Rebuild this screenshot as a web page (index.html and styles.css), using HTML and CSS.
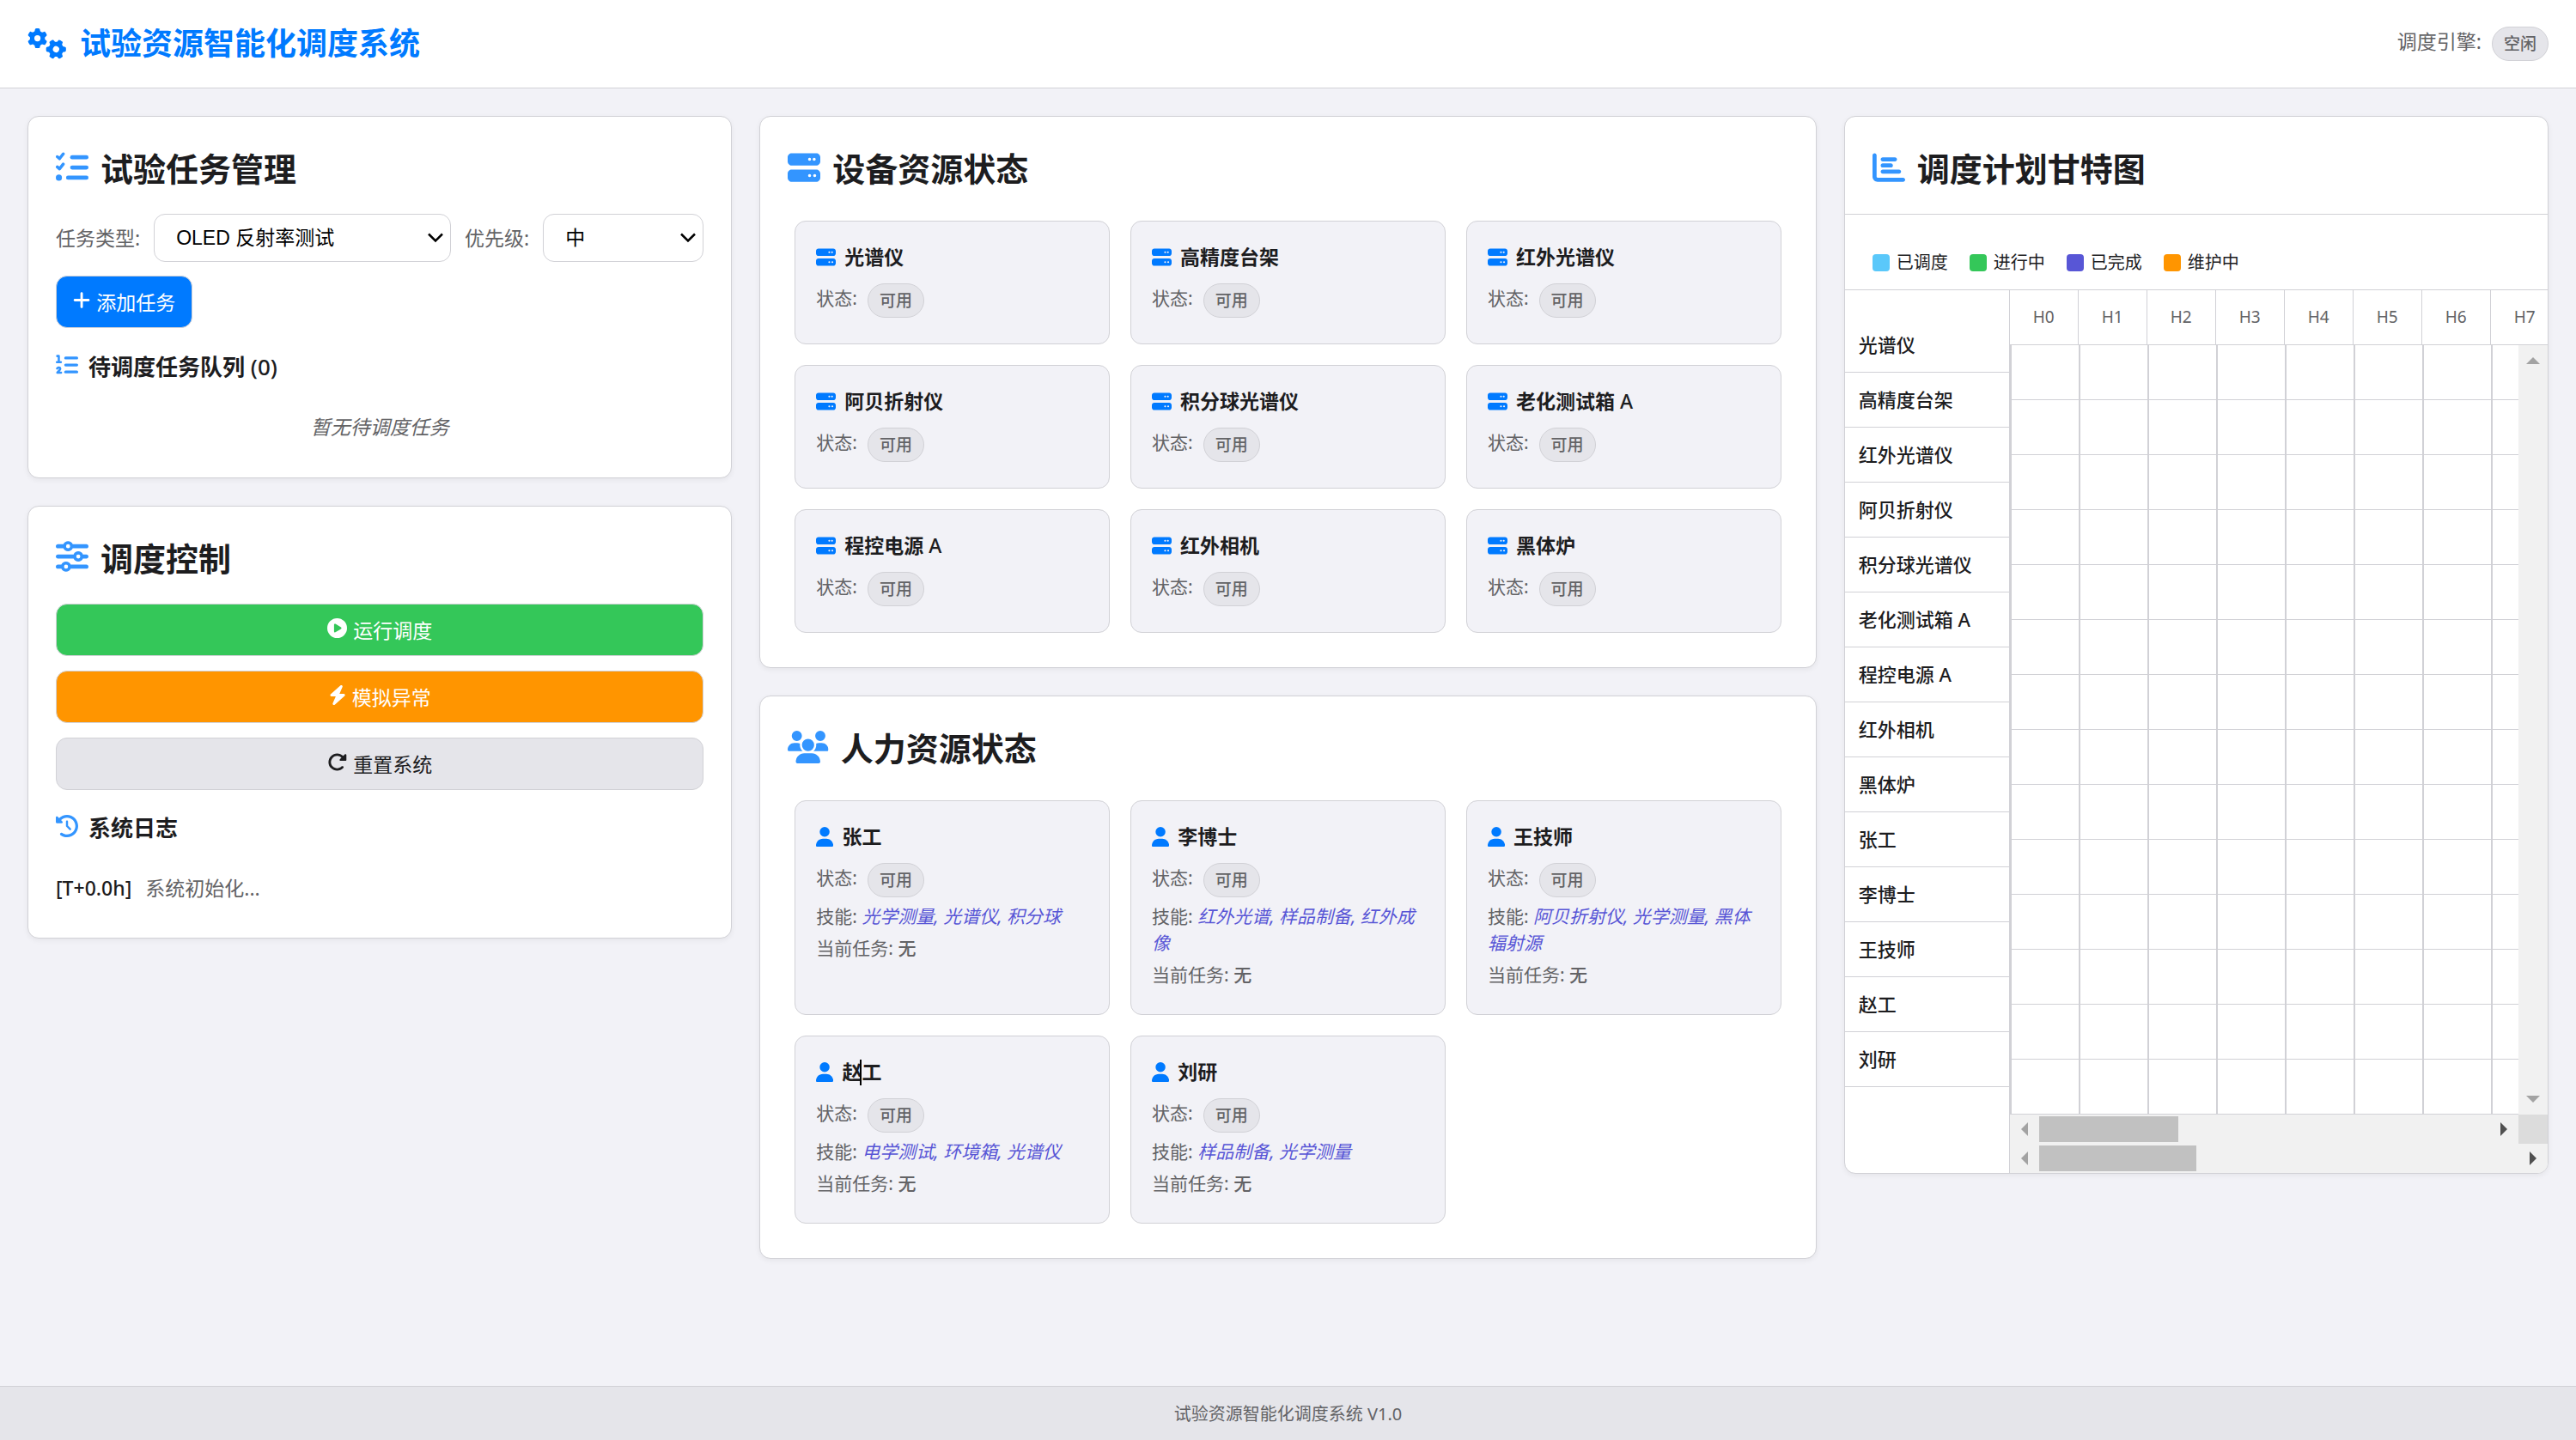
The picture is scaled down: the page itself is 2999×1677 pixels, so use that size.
FILE: index.html
```html
<!DOCTYPE html>
<html lang="zh-CN">
<head>
    <meta charset="UTF-8">
    <meta name="viewport" content="width=device-width, initial-scale=1.0">
    <title>试验资源智能化调度系统</title>
    <link rel="stylesheet" href="styles.css">
</head>
<body>
    <!-- 图标定义 -->
    <svg class="icon-defs" aria-hidden="true">
        <symbol id="i-gear" viewBox="0 0 512 512"><path fill-rule="evenodd" d="M495.900 166.600c3.200 8.700.5 18.400-6.400 24.600l-43.300 39.400c1.100 8.300 1.700 16.800 1.700 25.400s-.6 17.100-1.700 25.400l43.300 39.400c6.900 6.200 9.600 15.900 6.400 24.600-4.400 11.900-9.700 23.300-15.800 34.300l-4.700 8.100c-6.600 11-14 21.400-22.100 31.200-5.900 7.200-15.700 9.600-24.500 6.800l-55.700-17.700c-13.400 10.300-28.200 18.900-44 25.400l-12.500 57.100c-2 9.100-9 16.300-18.200 17.800-13.800 2.300-28 3.500-42.500 3.500s-28.700-1.200-42.500-3.500c-9.200-1.500-16.200-8.700-18.200-17.800l-12.500-57.100c-15.800-6.500-30.600-15.100-44-25.400l-55.600 17.800c-8.800 2.800-18.600.3-24.500-6.800-8.100-9.800-15.500-20.200-22.100-31.200l-4.700-8.100c-6.100-11-11.400-22.400-15.800-34.300-3.200-8.700-.5-18.400 6.400-24.600l43.300-39.400c-1.100-8.400-1.700-16.900-1.700-25.500s.6-17.100 1.700-25.400l-43.300-39.400c-6.900-6.200-9.600-15.900-6.400-24.600 4.400-11.900 9.700-23.300 15.800-34.300l4.700-8.100c6.600-11 14-21.400 22.100-31.200 5.900-7.200 15.700-9.600 24.500-6.800l55.700 17.700c13.400-10.300 28.200-18.900 44-25.400l12.500-57.100c2-9.100 9-16.300 18.200-17.800C227.300 1.200 241.500 0 256 0s28.700 1.200 42.500 3.500c9.200 1.500 16.200 8.700 18.200 17.800l12.500 57.100c15.800 6.500 30.600 15.100 44 25.400l55.700-17.700c8.800-2.800 18.600-.3 24.500 6.800 8.100 9.800 15.500 20.200 22.100 31.200l4.700 8.100c6.100 11 11.400 22.400 15.700 34.400zM256 336a80 80 0 1 0 0-160 80 80 0 1 0 0 160z"/></symbol>
        <symbol id="i-cogs" viewBox="0 0 640 512"><use href="#i-gear" x="0" y="0" width="330" height="330"/><use href="#i-gear" x="308" y="182" width="330" height="330" transform="rotate(30 473 347)"/></symbol>
        <symbol id="i-tasks" viewBox="0 0 512 512"><path d="M48 88l34 30 58-74M48 248l34 30 58-74" transform="translate(-24 0)" fill="none" stroke="currentColor" stroke-width="48" stroke-linecap="round" stroke-linejoin="round"/><circle cx="48" cy="416" r="48"/><rect x="224" y="64" width="288" height="64" rx="32"/><rect x="224" y="224" width="288" height="64" rx="32"/><rect x="160" y="384" width="352" height="64" rx="32"/></symbol>
        <symbol id="i-listol" viewBox="0 0 512 512"><path d="M32 52h36v132M24 192h92M30 336c18-34 76-24 70 14-3 22-40 48-66 82h86" fill="none" stroke="currentColor" stroke-width="50" stroke-linecap="round" stroke-linejoin="round"/><rect x="192" y="64" width="320" height="64" rx="32"/><rect x="192" y="224" width="320" height="64" rx="32"/><rect x="192" y="384" width="320" height="64" rx="32"/></symbol>
        <symbol id="i-sliders" viewBox="0 0 512 512"><path d="M0 416c0 17.700 14.300 32 32 32h54.700c12.300 28.300 40.500 48 73.300 48s61-19.700 73.300-48H480c17.700 0 32-14.300 32-32s-14.300-32-32-32H233.300c-12.300-28.300-40.500-48-73.300-48s-61 19.700-73.300 48H32c-17.700 0-32 14.300-32 32zm128 0a32 32 0 1 1 64 0 32 32 0 1 1-64 0zm192-160a32 32 0 1 1 64 0 32 32 0 1 1-64 0zm32-80c-32.800 0-61 19.700-73.300 48H32c-17.700 0-32 14.300-32 32s14.300 32 32 32h246.700c12.300 28.300 40.500 48 73.300 48s61-19.700 73.300-48H480c17.700 0 32-14.300 32-32s-14.300-32-32-32h-54.700c-12.300-28.300-40.500-48-73.300-48zM192 128a32 32 0 1 1 0-64 32 32 0 1 1 0 64zm73.300-64C253 35.700 224.800 16 192 16s-61 19.700-73.300 48H32C14.300 64 0 78.300 0 96s14.300 32 32 32h86.700c12.300 28.300 40.500 48 73.300 48s61-19.700 73.300-48H480c17.700 0 32-14.300 32-32s-14.300-32-32-32H265.300z"/></symbol>
        <symbol id="i-server" viewBox="0 0 512 512"><path fill-rule="evenodd" d="M64 32C28.700 32 0 60.700 0 96v64c0 35.300 28.700 64 64 64h384c35.300 0 64-28.700 64-64V96c0-35.300-28.700-64-64-64H64zm280 72a24 24 0 1 1 0 48 24 24 0 1 1 0-48zm48 24a24 24 0 1 1 48 0 24 24 0 1 1-48 0zM64 288c-35.300 0-64 28.700-64 64v64c0 35.300 28.700 64 64 64h384c35.300 0 64-28.700 64-64v-64c0-35.300-28.700-64-64-64H64zm280 72a24 24 0 1 1 0 48 24 24 0 1 1 0-48zm56 24a24 24 0 1 1 48 0 24 24 0 1 1-48 0z"/></symbol>
        <symbol id="i-users" viewBox="0 0 640 512"><path d="M144 0a80 80 0 1 1 0 160 80 80 0 1 1 0-160zm368 0a80 80 0 1 1 0 160 80 80 0 1 1 0-160zM0 298.700C0 239.800 47.800 192 106.700 192h42.700c15.900 0 31 3.500 44.600 9.700-1.300 7.200-1.900 14.700-1.900 22.300 0 38.200 16.800 72.500 43.300 96H21.300C9.600 320 0 310.400 0 298.700zM405.300 320h-.7c26.600-23.500 43.300-57.800 43.300-96 0-7.600-.7-15-1.900-22.300 13.600-6.300 28.700-9.700 44.600-9.700h42.700c58.900 0 106.700 47.800 106.700 106.700 0 11.700-9.600 21.300-21.300 21.300H405.300zM224 224a96 96 0 1 1 192 0 96 96 0 1 1-192 0zM128 485.300C128 411.700 187.700 352 261.300 352h117.400c73.600 0 133.300 59.700 133.300 133.300 0 14.700-11.900 26.700-26.700 26.700H154.700c-14.700 0-26.700-11.900-26.700-26.700z"/></symbol>
        <symbol id="i-user" viewBox="0 0 448 512"><path d="M224 256a128 128 0 1 0 0-256 128 128 0 1 0 0 256zm-45.700 48C79.800 304 0 383.800 0 482.300 0 498.700 13.300 512 29.700 512h388.600c16.400 0 29.700-13.300 29.700-29.700 0-98.500-79.800-178.300-178.300-178.300h-91.400z"/></symbol>
        <symbol id="i-plus" viewBox="0 0 448 512"><path d="M256 80c0-17.700-14.300-32-32-32s-32 14.300-32 32v144H48c-17.700 0-32 14.300-32 32s14.300 32 32 32h144v144c0 17.700 14.300 32 32 32s32-14.300 32-32V288h144c17.700 0 32-14.300 32-32s-14.300-32-32-32H256V80z"/></symbol>
        <symbol id="i-play" viewBox="0 0 512 512"><path fill-rule="evenodd" d="M256 0a256 256 0 1 1 0 512 256 256 0 1 1 0-512zM188.300 147.100c-7.600 4.200-12.300 12.300-12.300 20.900v176c0 8.700 4.700 16.700 12.300 20.900s16.800 4.100 24.300-.5l144-88c7.100-4.400 11.500-12.100 11.500-20.500s-4.400-16.100-11.500-20.500l-144-88c-7.400-4.500-16.700-4.700-24.300-.3z"/></symbol>
        <symbol id="i-bolt" viewBox="0 0 448 512"><path d="M349.400 44.600c5.900-13.700 1.500-29.700-10.600-38.500s-28.600-8-39.900 1.800l-256 224c-10 8.800-13.600 22.900-8.900 35.300S50.700 288 64 288h111.500L98.600 467.400c-5.900 13.700-1.500 29.700 10.600 38.500s28.600 8 39.900-1.800l256-224c10-8.800 13.600-22.900 8.900-35.300s-16.600-20.700-30-20.700H272.500l76.900-179.500z"/></symbol>
        <symbol id="i-redo" viewBox="0 0 512 512"><path d="M463.500 224H472c13.300 0 24-10.700 24-24V72c0-9.700-5.800-18.500-14.800-22.200s-19.300-1.700-26.200 5.200l-41.600 41.600c-87.600-86.500-228.700-86.200-315.800 1-87.500 87.500-87.500 229.300 0 316.800s229.300 87.500 316.800 0c12.500-12.500 12.500-32.800 0-45.300s-32.800-12.500-45.300 0c-62.500 62.500-163.800 62.500-226.300 0s-62.500-163.800 0-226.300c62.200-62.200 162.700-62.500 225.300-1L327 183c-6.900 6.900-8.900 17.200-5.200 26.200s12.500 14.800 22.200 14.800h119.500z"/></symbol>
        <symbol id="i-history" viewBox="0 0 512 512"><path d="M75 75L41 41C25.900 25.900 0 36.600 0 57.900V168c0 13.300 10.700 24 24 24h110.100c21.400 0 32.100-25.900 17-41l-30.800-30.800C155 85.500 203 64 256 64c106 0 192 86 192 192s-86 192-192 192c-40.800 0-78.600-12.700-109.700-34.400-14.500-10.100-34.400-6.600-44.600 7.900s-6.600 34.400 7.900 44.600C151.200 495 201.700 512 256 512c141.400 0 256-114.600 256-256S397.400 0 256 0C185.300 0 121.300 28.700 75 75zm181 53c-13.300 0-24 10.700-24 24v104c0 6.400 2.500 12.500 7 17l72 72c9.400 9.400 24.600 9.400 33.900 0s9.400-24.600 0-33.900l-65-65V152c0-13.300-10.700-24-24-24z"/></symbol>
        <symbol id="i-chart" viewBox="0 0 512 512"><path d="M32 32c17.700 0 32 14.300 32 32v336c0 8.800 7.200 16 16 16h400c17.700 0 32 14.300 32 32s-14.300 32-32 32H80c-44.200 0-80-35.800-80-80V64c0-17.700 14.300-32 32-32zm96 96c0-17.700 14.300-32 32-32h192c17.700 0 32 14.300 32 32s-14.300 32-32 32H160c-17.700 0-32-14.300-32-32zm32 64h128c17.700 0 32 14.300 32 32s-14.300 32-32 32H160c-17.700 0-32-14.300-32-32s14.300-32 32-32zm0 96h256c17.700 0 32 14.300 32 32s-14.300 32-32 32H160c-17.700 0-32-14.300-32-32s14.300-32 32-32z"/></symbol>
    </svg>

    <header class="app-header">
        <h1><svg class="icon icon-wide"><use href="#i-cogs"/></svg>试验资源智能化调度系统</h1>
        <div class="engine">调度引擎: <span class="badge">空闲</span></div>
    </header>

    <main class="main">
        <div class="column">
            <section class="card">
                <h2><svg class="icon"><use href="#i-tasks"/></svg>试验任务管理</h2>
                <div class="task-form">
                    <label for="taskType">任务类型:</label>
                    <select id="taskType" class="select-type">
                        <option>OLED 反射率测试</option>
                    </select>
                    <label for="priority">优先级:</label>
                    <select id="priority" class="select-priority">
                        <option>高</option>
                        <option selected>中</option>
                        <option>低</option>
                    </select>
                    <button type="button" class="btn btn-primary"><svg class="icon icon-narrow"><use href="#i-plus"/></svg>添加任务</button>
                </div>
                <h3><svg class="icon"><use href="#i-listol"/></svg><span>待调度任务队列 <span class="latin">(0)</span></span></h3>
                <p class="empty">暂无待调度任务</p>
            </section>

            <section class="card">
                <h2><svg class="icon"><use href="#i-sliders"/></svg>调度控制</h2>
                <div class="controls">
                    <button type="button" class="btn btn-success"><svg class="icon"><use href="#i-play"/></svg>运行调度</button>
                    <button type="button" class="btn btn-warning"><svg class="icon icon-narrow"><use href="#i-bolt"/></svg>模拟异常</button>
                    <button type="button" class="btn"><svg class="icon"><use href="#i-redo"/></svg>重置系统</button>
                </div>
                <h3><svg class="icon"><use href="#i-history"/></svg>系统日志</h3>
                <p class="log"><span class="log-time">[T+0.0h]</span>系统初始化...</p>
            </section>
        </div>

        <div class="column">
            <section class="card">
                <h2><svg class="icon"><use href="#i-server"/></svg>设备资源状态</h2>
                <div class="resources" id="devices"></div>
            </section>

            <section class="card">
                <h2><svg class="icon icon-wide"><use href="#i-users"/></svg>人力资源状态</h2>
                <div class="resources" id="people"></div>
            </section>
        </div>

        <div class="column">
            <section class="card gantt">
                <h2><svg class="icon"><use href="#i-chart"/></svg>调度计划甘特图</h2>
                <div class="legend">
                    <span><i class="swatch scheduled"></i>已调度</span>
                    <span><i class="swatch running"></i>进行中</span>
                    <span><i class="swatch done"></i>已完成</span>
                    <span><i class="swatch maintenance"></i>维护中</span>
                </div>
                <div class="gantt-body">
                    <div class="gantt-labels" id="ganttLabels"></div>
                    <div class="gantt-chart">
                        <div class="hours" id="hours"></div>
                        <div class="gantt-view">
                            <div class="gantt-grid" id="ganttGrid"></div>
                            <div class="scroll scroll-y" aria-hidden="true"><i class="arrow up"></i><i class="arrow down"></i></div>
                        </div>
                        <div class="scroll-line" aria-hidden="true">
                            <div class="scroll scroll-x"><i class="arrow left"></i><i class="thumb"></i><i class="arrow right"></i></div>
                            <i class="corner"></i>
                        </div>
                        <div class="scroll-line" aria-hidden="true">
                            <div class="scroll scroll-x"><i class="arrow left"></i><i class="thumb thumb-outer"></i><i class="arrow right"></i></div>
                        </div>
                    </div>
                </div>
            </section>
        </div>
    </main>

    <footer class="app-footer">试验资源智能化调度系统 V1.0</footer>

    <script src="script.js"></script>
</body>
</html>
```

FILE: styles.css
```css
* {
    box-sizing: border-box;
}

body {
    margin: 0;
    min-height: 100vh;
    display: flex;
    flex-direction: column;
    font-family: "Noto Sans", "Noto Sans CJK SC", sans-serif;
    font-size: 23px;
    line-height: 1.5;
    color: #1d1d1f;
    background-color: #f2f2f7;
}

h1, h2, h3, h4, p {
    margin: 0;
}

.icon-defs {
    position: absolute;
    width: 0;
    height: 0;
}

.icon {
    width: 1em;
    height: 1em;
    fill: currentColor;
    flex: none;
}

.icon-wide {
    width: 1.25em;
}

.icon-narrow {
    width: 0.875em;
}

.latin {
    font-weight: 500;
}

/* 页头 */
.app-header {
    height: 103px;
    padding: 0 32px;
    display: flex;
    align-items: center;
    justify-content: space-between;
    background-color: #fff;
    border-bottom: 1px solid #d1d1d6;
}

.app-header h1 {
    display: flex;
    align-items: center;
    gap: 16px;
    font-size: 36px;
    font-weight: 600;
    color: #007aff;
}

.engine {
    display: flex;
    align-items: flex-start;
    gap: 12px;
    color: #636366;
}

.badge {
    display: inline-block;
    padding: 4px 13px;
    font-size: 19px;
    line-height: 30px;
    font-weight: 500;
    color: #636366;
    background-color: #e5e5ea;
    border: 1px solid #d1d1d6;
    border-radius: 20px;
}

/* 布局 */
.main {
    flex: 1;
    display: grid;
    grid-template-columns: 1fr 1.5fr 1fr;
    gap: 32px;
    padding: 32px;
    align-items: start;
}

.column {
    display: flex;
    flex-direction: column;
    gap: 32px;
    min-width: 0;
}

.card {
    padding: 32px;
    background-color: #fff;
    border: 1px solid #d1d1d6;
    border-radius: 13px;
    box-shadow: 0 2px 6px rgba(0, 0, 0, 0.06);
}

.card h2 {
    display: flex;
    align-items: center;
    gap: 14px;
    margin-bottom: 24px;
    font-size: 38px;
    line-height: 57px;
    font-weight: 600;
}

.card h3 {
    display: flex;
    align-items: center;
    gap: 12px;
    font-size: 26px;
    line-height: 38px;
    font-weight: 600;
}

.card h2 .icon,
.card h3 .icon {
    margin-bottom: 4px;
    color: #3395ff;
}

/* 任务表单 */
.task-form {
    display: flex;
    flex-wrap: wrap;
    align-items: center;
    gap: 16px;
    margin-bottom: 26px;
}

.task-form label {
    color: #636366;
}

select {
    height: 56px;
    padding: 0 34px 0 25px;
    font-family: "Liberation Sans", "Noto Sans CJK SC", sans-serif;
    font-size: 23px;
    color: #000;
    background: #fff url("data:image/svg+xml,%3Csvg xmlns='http://www.w3.org/2000/svg' width='18' height='12' fill='none' stroke='black' stroke-width='2.5'%3E%3Cpath d='M1 1.500l8 8 8-8'/%3E%3C/svg%3E") no-repeat right 8px center;
    border: 1px solid #d1d1d6;
    border-radius: 13px;
    appearance: none;
}

.select-type {
    flex: 1;
}

.select-priority {
    width: 187px;
}

.btn {
    height: 61px;
    padding: 2px 19px 0;
    display: flex;
    align-items: center;
    justify-content: center;
    gap: 7px;
    font: inherit;
    color: #1d1d1f;
    background-color: #e5e5ea;
    border: 1px solid #d1d1d6;
    border-radius: 13px;
    cursor: pointer;
}

.btn .icon {
    margin-bottom: 6px;
}

.btn-primary {
    color: #fff;
    background-color: #007aff;
}

.btn-success {
    color: #fff;
    background-color: #34c759;
}

.btn-warning {
    color: #fff;
    background-color: #ff9500;
}

.empty,
.log {
    padding: 34px 0 9px;
    color: #636366;
}

.empty {
    text-align: center;
    font-style: italic;
}

.controls {
    display: flex;
    flex-direction: column;
    gap: 17px;
    margin-bottom: 25px;
}

.log-time {
    margin-right: 16px;
    font-weight: 500;
    color: #1d1d1f;
}

/* 资源卡片 */
.resources {
    display: grid;
    grid-template-columns: repeat(3, 1fr);
    gap: 24px;
    padding: 8px;
}

.resource {
    padding: 24px;
    background-color: #f2f2f7;
    border: 1px solid #d1d1d6;
    border-radius: 13px;
    font-size: 21px;
    line-height: 31px;
    color: #636366;
}

.resource h4 {
    display: flex;
    align-items: center;
    gap: 10px;
    margin-bottom: 13px;
    font-size: 23px;
    line-height: 35px;
    font-weight: 600;
    color: #1d1d1f;
}

.resource h4 .icon {
    color: #007aff;
}

.resource p {
    margin-bottom: 6px;
}

.resource .status {
    display: flex;
    align-items: flex-start;
    gap: 12px;
    height: 40px;
    line-height: 34px;
}

.resource .status:not(:last-child) {
    margin-bottom: 7px;
}

.skills {
    color: #5856d6;
    font-style: italic;
}

.resource strong {
    font-weight: 500;
}

.caret {
    position: relative;
}

.caret::after {
    content: "";
    position: absolute;
    right: 0;
    top: 2px;
    width: 2px;
    height: 30px;
    background-color: #000;
}

/* 甘特图 */
.gantt {
    padding: 0;
    overflow: hidden;
}

.gantt h2 {
    margin: 0;
    padding: 32px 32px 24px;
    border-bottom: 1px solid #d1d1d6;
}

.legend {
    display: flex;
    gap: 25px;
    padding: 41px 32px 16px;
    font-size: 20px;
    line-height: 30px;
    border-bottom: 1px solid #d1d1d6;
}

.legend span {
    display: flex;
    align-items: center;
    gap: 8px;
}

.swatch {
    width: 20px;
    height: 20px;
    border-radius: 4px;
}

.scheduled {
    background-color: #5ac8fa;
}

.running {
    background-color: #34c759;
}

.done {
    background-color: #5856d6;
}

.maintenance {
    background-color: #ff9500;
}

.gantt-body {
    display: flex;
}

.gantt-labels {
    width: 192px;
    flex: none;
    padding-top: 32px;
    border-right: 1px solid #d1d1d6;
}

.gantt-labels div {
    height: 64px;
    padding: 0 16px;
    font-size: 22px;
    line-height: 63px;
    font-weight: 500;
    border-bottom: 1px solid #d1d1d6;
}

.gantt-chart {
    flex: 1;
    min-width: 0;
}

.hours {
    display: flex;
    overflow: hidden;
    border-bottom: 1px solid #d1d1d6;
}

.hours div {
    flex: none;
    width: 80px;
    height: 63px;
    font-size: 19px;
    line-height: 63px;
    text-align: center;
    color: #636366;
    border-right: 1px solid #d1d1d6;
}

.gantt-view,
.scroll-line {
    display: flex;
}

.gantt-grid {
    flex: 1;
    min-width: 0;
    overflow: hidden;
}

.gantt-row {
    display: flex;
    height: 64px;
    border-bottom: 1px solid #d1d1d6;
}

.gantt-row div {
    flex: none;
    width: 80px;
    border-left: 2px solid #d1d1d6;
}

/* 滚动条 */
.scroll {
    display: flex;
    justify-content: space-between;
    align-items: center;
    background-color: #f1f1f1;
}

.scroll-y {
    width: 34px;
    flex-direction: column;
    padding: 14px 0;
}

.scroll-x {
    flex: 1;
    height: 34px;
    padding: 0 13px;
}

.thumb {
    width: 162px;
    height: 30px;
    margin: 0 auto 0 13px;
    background-color: #c1c1c1;
}

.thumb-outer {
    width: 183px;
}

.corner {
    width: 34px;
    height: 34px;
    background-color: #dcdcdc;
}

.arrow {
    border: 8px solid transparent;
}

.arrow.up {
    border-top: 0;
    border-bottom-color: #a3a3a3;
}

.arrow.down {
    border-bottom: 0;
    border-top-color: #a3a3a3;
}

.arrow.left {
    border-left: 0;
    border-right-color: #a3a3a3;
}

.arrow.right {
    border-right: 0;
    border-left-color: #505050;
}

.app-footer {
    height: 63px;
    line-height: 63px;
    text-align: center;
    font-size: 20px;
    color: #636366;
    background-color: #e5e5ea;
    border-top: 1px solid #d1d1d6;
}
```

FILE: script.js
```js
const devices = ["光谱仪", "高精度台架", "红外光谱仪", "阿贝折射仪", "积分球光谱仪", "老化测试箱 A", "程控电源 A", "红外相机", "黑体炉"];

const people = [
    { name: "张工", skills: "光学测量, 光谱仪, 积分球" },
    { name: "李博士", skills: "红外光谱, 样品制备, 红外成像" },
    { name: "王技师", skills: "阿贝折射仪, 光学测量, 黑体辐射源" },
    { name: '<span class="caret">赵</span>工', skills: "电学测试, 环境箱, 光谱仪" },
    { name: "刘研", skills: "样品制备, 光学测量" }
];

const statusRow = '<p class="status">状态: <span class="badge">可用</span></p>';

// 设备卡片
document.getElementById("devices").innerHTML = devices.map(name => `
    <article class="resource">
        <h4><svg class="icon"><use href="#i-server"/></svg><span>${name.replace("A", '<span class="latin">A</span>')}</span></h4>
        ${statusRow}
    </article>`).join("");

// 人员卡片
document.getElementById("people").innerHTML = people.map(p => `
    <article class="resource">
        <h4><svg class="icon icon-narrow"><use href="#i-user"/></svg><span>${p.name}</span></h4>
        ${statusRow}
        <p>技能: <span class="skills">${p.skills}</span></p>
        <p>当前任务: <strong>无</strong></p>
    </article>`).join("");

// 甘特图
const rows = devices.concat(["张工", "李博士", "王技师", "赵工", "刘研"]);
document.getElementById("ganttLabels").innerHTML = rows.map(name => `<div>${name}</div>`).join("");

// 只画出视图内的 8 个小时
let hours = "";
let cells = "";
for (let h = 0; h < 8; h++) {
    hours += `<div>H${h}</div>`;
    cells += "<div></div>";
}
document.getElementById("hours").innerHTML = hours;
document.getElementById("ganttGrid").innerHTML = rows.map(() => `<div class="gantt-row">${cells}</div>`).join("");
```
